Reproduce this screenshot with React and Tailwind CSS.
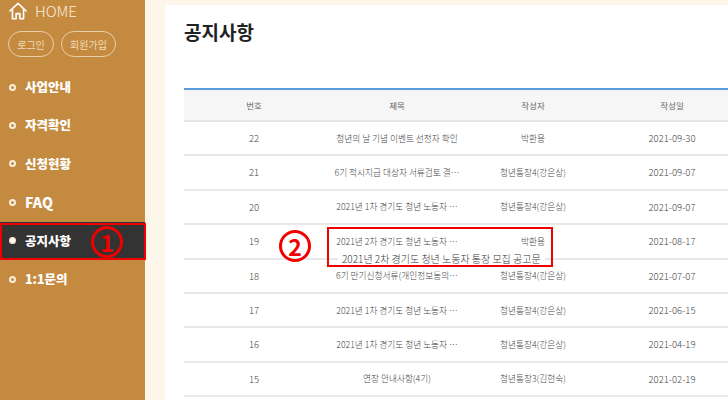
const font = { fontFamily: '"Noto Sans CJK KR", "Noto Sans", sans-serif' }

const menu = [
  { label: '사업안내', size: 'text-[12.5px]' },
  { label: '자격확인', size: 'text-[12.5px]' },
  { label: '신청현황', size: 'text-[12.5px]' },
  { label: 'FAQ', size: 'text-[14px]' },
  { label: '공지사항', size: 'text-[12.5px]', active: true },
  { label: '1:1문의', size: 'text-[12.5px]' },
]

const rows = [
  ['22', '청년의 날 기념 이벤트 선정자 확인', '박환용', '2021-09-30'],
  ['21', '6기 적시지급 대상자 서류검토 결…', '청년통장4(강은상)', '2021-09-07'],
  ['20', '2021년 1차 경기도 청년 노동자 …', '청년통장4(강은상)', '2021-09-07'],
  ['19', '2021년 2차 경기도 청년 노동자 …', '박환용', '2021-08-17'],
  ['18', '6기 만기신청서류(개인정보동의…', '청년통장4(강은상)', '2021-07-07'],
  ['17', '2021년 1차 경기도 청년 노동자 …', '청년통장4(강은상)', '2021-06-15'],
  ['16', '2021년 1차 경기도 청년 노동자 …', '청년통장4(강은상)', '2021-04-19'],
  ['15', '연장 안내사항(4기)', '청년통장3(김현숙)', '2021-02-19'],
]

function Badge({ n, className }) {
  return (
    <span className={`absolute flex h-[32px] w-[32px] items-center justify-center rounded-full border-[3px] border-[#f00000] bg-transparent text-[23px] font-bold leading-none text-[#f00000] ${className}`}>
      {n}
    </span>
  )
}

function Sidebar() {
  return (
    <aside className="relative h-full w-[145px] shrink-0 bg-[#c48b40]">
      <div className="flex h-[21px] items-center gap-[8px] pl-[9px] pt-[1px] text-[#fbeedb]">
        <svg width="18" height="18" viewBox="0 0 21 21" fill="none" stroke="#ffffff" strokeWidth="1.9" strokeLinejoin="round" strokeLinecap="round">
          <path d="M1 10.5 10.5 1.5 20 10.5" />
          <path d="M4 8.5V19.5H8.3V13.5H12.7V19.5H17V8.5" />
        </svg>
        <span className="text-[15px] font-light leading-[20px]">HOME</span>
      </div>
      <div className="mt-[10px] flex gap-[7px] pl-[8px]">
        <span className="flex h-[26px] w-[46px] items-center justify-center rounded-full border border-[#e9cfa6] text-[10px] text-[#f0dcbc]">로그인</span>
        <span className="flex h-[26px] w-[55px] items-center justify-center rounded-full border border-[#e9cfa6] text-[10px] text-[#f0dcbc]">회원가입</span>
      </div>
      <nav className="mt-[11px] flex flex-col">
        {menu.map((m) => (
          <div
            key={m.label}
            className={`flex h-[38.4px] items-center gap-[9px] pl-[9px] text-white ${m.active ? 'bg-[#333333]' : ''}`}
          >
            <span className={`h-[7px] w-[7px] rounded-full border-[2px] border-[#fbeedb] ${m.active ? 'bg-white' : ''}`} />
            <span className={`${m.size} font-black leading-none`}>{m.label}</span>
          </div>
        ))}
      </nav>
      {/* annotation */}
      <div className="absolute left-0 top-[223px] h-[37px] w-[146px] border-[2px] border-[#f00000]" />
      <Badge n="1" className="left-[91px] top-[226px]" />
    </aside>
  )
}

function Row({ cells, header }) {
  return (
    <div
      className={`grid grid-cols-[140px_146px_126px_152px] items-center text-center ${
        header
          ? 'h-[32px] border-b-[2px] border-[#e6e6e6] bg-[#f6f6f6] text-[8.5px] text-[#666666]'
          : 'h-[34.4px] border-b-[2px] border-[#e8e8e8] text-[8.7px] font-light text-[#444444]'
      }`}
    >
      {cells.map((c, i) => (
        <span key={i} className={`truncate whitespace-nowrap ${!header && (i === 0 || i === 3) ? 'text-[9.5px]' : ''}`}>{c}</span>
      ))}
    </div>
  )
}

export default function App() {
  return (
    <div style={font} className="flex h-[400px] w-[728px] overflow-hidden bg-[#fdf6ea]">
      <Sidebar />
      <main className="relative ml-[20px] mt-[5px] h-[395px] flex-1 overflow-hidden bg-white pl-[19px]">
        <h1 className="pt-[13px] text-[19px] font-bold leading-[27px] text-[#222222]">공지사항</h1>
        <div className="mt-[43px] w-[564px] border-t-[2px] border-[#5b9bdc]">
          <Row header cells={['번호', '제목', '작성자', '작성일']} />
          {rows.map((r) => (
            <Row key={r[0]} cells={r} />
          ))}
        </div>
        {/* hover title and annotation */}
        <div className="absolute left-[173px] top-[248px] bg-white px-[4px] text-[10px] font-light leading-[12px] whitespace-nowrap text-[#333333]">
          2021년 2차 경기도 청년 노동자 통장 모집 공고문
        </div>
        <div className="absolute left-[162px] top-[222px] h-[40px] w-[226px] border-[2px] border-[#f00000]" />
        <Badge n="2" className="left-[114px] top-[225px]" />
      </main>
    </div>
  )
}
